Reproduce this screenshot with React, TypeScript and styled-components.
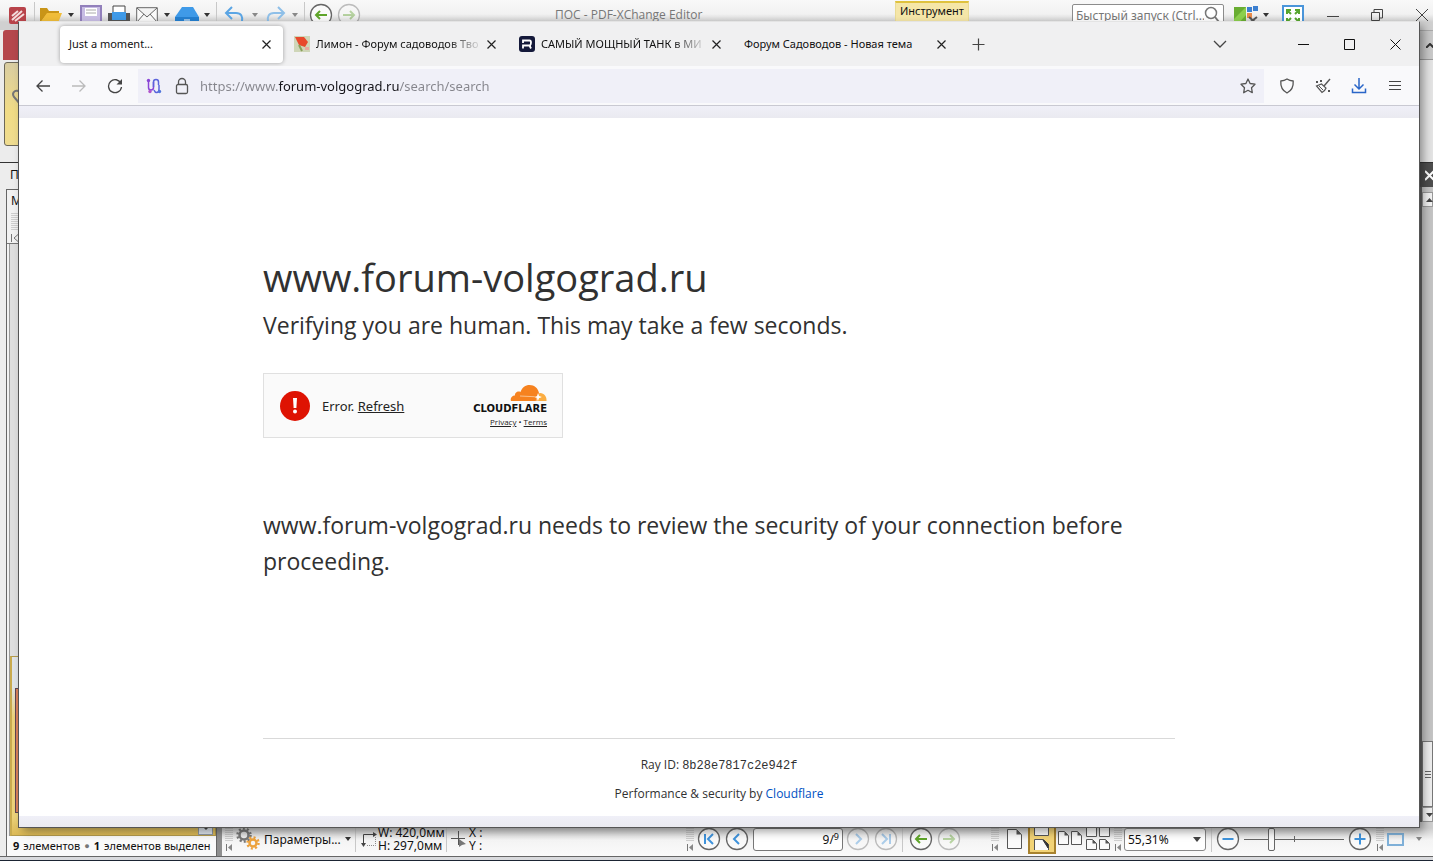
import React from "react";
import styled, { createGlobalStyle } from "styled-components";

const Global = createGlobalStyle`
  * { box-sizing: border-box; }
  body { margin: 0; font-family: "Noto Sans", "Open Sans", sans-serif; font-size: 12px; color: #111; }
  button, input, select { font: inherit; color: inherit; margin: 0; }
  h1, h2, p { margin: 0; font-weight: 400; }
`;

/* ---------- shared pieces ---------- */

const Svg = styled.svg<{ $w: number; $h: number }>`
  width: ${(p) => p.$w}px;
  height: ${(p) => p.$h}px;
  flex: none;
  display: block;
`;

type IconProps = { w?: number; h?: number; box?: string; children: React.ReactNode };
const Icon = ({ w = 16, h = 16, box, children }: IconProps) => (
  <Svg $w={w} $h={h} viewBox={box ?? `0 0 ${w} ${h}`} fill="none" aria-hidden="true">
    {children}
  </Svg>
);

const PlainButton = styled.button<{ $w?: number; $dim?: boolean }>`
  border: 0;
  padding: 0;
  background: none;
  flex: none;
  display: flex;
  align-items: center;
  justify-content: center;
  width: ${(p) => p.$w ?? 16}px;
  opacity: ${(p) => (p.$dim ? 0.4 : 1)};
`;

const Gap = styled.span<{ $w: number }>`
  flex: none;
  width: ${(p) => p.$w}px;
`;

const Spacer = styled.span`
  flex: 1;
`;

const Divider = styled.span`
  flex: none;
  width: 1px;
  height: 26px;
  background: #c8c8c8;
`;

const Caret = ({ dim }: { dim?: boolean }) => (
  <Icon w={6} h={4}>
    <path d="M0 0h6L3 4z" fill={dim ? "#888" : "#333"} />
  </Icon>
);

/* ---------- editor window ---------- */

const Desktop = styled.div`
  position: relative;
  min-height: 100vh;
  display: flex;
  flex-direction: column;
  overflow: hidden;
  background: #ececec;
`;

const TitleBar = styled.header`
  flex: none;
  display: flex;
  align-items: center;
  height: 30px;
  padding: 0 4px 0 9px;
  background: linear-gradient(#f9f9f9, #f2f2f2 14px, #d0d0d0 22px);
`;

const WindowTitle = styled.span`
  width: 146px;
  color: #777;
  font-family: "Open Sans", sans-serif;
  font-size: 12px;
  line-height: 16px;
  white-space: nowrap;
`;

const ContextTab = styled.button`
  align-self: flex-start;
  flex: none;
  width: 74px;
  margin-top: 1px;
  padding: 0;
  border: 1px solid #eadb94;
  border-top: 2px solid #dfc23e;
  background: #f5e6a8;
  font-size: 11px;
  line-height: 15px;
  text-align: center;
`;

const QuickLaunch = styled.label`
  display: flex;
  align-items: center;
  flex: none;
  width: 152px;
  height: 23px;
  padding: 0 3px;
  border: 1px solid #8c8c8c;
  border-radius: 2px;
  background: #fff;
`;

const QuickInput = styled.input`
  flex: 1;
  min-width: 0;
  border: 0;
  padding: 0;
  outline: 0;
  background: none;
  font-size: 12px;
  &::placeholder { color: #777; opacity: 1; }
`;

const Ribbon = styled.div`
  flex: none;
  display: flex;
  justify-content: space-between;
  height: 132px;
`;

const RibbonLeft = styled.div`
  width: 60px;
  padding-left: 3px;
`;

const FileTab = styled.button`
  display: block;
  width: 50px;
  height: 30px;
  border: 0;
  border-radius: 3px 3px 0 0;
  background: #b5474c;
`;

const HandTool = styled.button`
  display: flex;
  width: 50px;
  height: 84px;
  margin: 2px 0 0 1px;
  padding: 26px 0 0 7px;
  border: 1px solid #6d6858;
  border-radius: 3px;
  background: linear-gradient(#d9cda2, #f1dc85 60%, #efdc90);
`;

const RibbonRight = styled.div`
  width: 14px;
  border-top: 1px solid #aaa;
  background: #e4e4e4;
`;

const CollapseButton = styled.button`
  display: flex;
  align-items: center;
  width: 14px;
  height: 29px;
  padding: 0 0 0 7px;
  border: 0;
  border-bottom: 1px solid #999;
  background: #c9c9c9;
`;

const Work = styled.div`
  flex: 1;
  display: flex;
  border-top: 1px solid #333;
`;

const LeftDock = styled.aside`
  flex: none;
  display: flex;
  flex-direction: column;
  width: 217px;
  padding-left: 6px;
  background: #ededed;
`;

const DockTitle = styled.div`
  height: 26px;
  padding: 3px 0 0 4px;
`;

const Panel = styled.section`
  flex: 1;
  display: flex;
  flex-direction: column;
  border: 1px solid #666;
  border-bottom: 0;
  background: #f2f2f2;
`;

const PanelHead = styled.div`
  display: flex;
  flex-direction: column;
  gap: 4px;
  height: 54px;
  padding: 2px 0 0 4px;
  border-bottom: 1px solid #777;
  line-height: 17px;
`;

const PanelBody = styled.div`
  flex: 1;
  display: flex;
  flex-direction: column;
  margin-left: 2px;
  border-left: 1px solid #999;
  background: #dedede;
`;

const SelectedThumb = styled.div`
  display: flex;
  align-items: stretch;
  height: 180px;
  margin-top: auto;
  padding: 31px 2px 0 3px;
  border: 1px solid #b29a4d;
  border-left: 2px solid #c9ab4f;
  background: linear-gradient(#dfe3e6 30px, #ecd27a 60px, #ecd27a 160px, #dcb955);
`;

const ThumbPage = styled.div`
  width: 120px;
  margin-bottom: 22px;
  border: 1px solid #5b4654;
  background: #d9815a;
`;

const ThumbScroll = styled.div`
  flex: 1;
  display: flex;
  align-items: flex-end;
  justify-content: flex-end;
`;

const ThumbArrow = styled.button`
  display: flex;
  align-items: center;
  justify-content: center;
  width: 15px;
  height: 15px;
  padding: 0;
  border: 1px solid #8f98a3;
  background: #dfe6ee;
`;

const PanelStatus = styled.div`
  display: flex;
  gap: 4px;
  height: 20px;
  padding-left: 6px;
  background: #fafafa;
  font-size: 11px;
  line-height: 19px;
  white-space: nowrap;
  small { color: #777; }
`;

const Splitter = styled.div`
  flex: none;
  width: 5px;
  background: #8f8f8f;
`;

const MainArea = styled.div`
  flex: 1;
  min-width: 0;
  display: flex;
  flex-direction: column;
`;

const DocumentRow = styled.div`
  flex: 1;
  display: flex;
  justify-content: flex-end;
  background: #777;
`;

const ScrollColumn = styled.div`
  display: flex;
  flex-direction: column;
  width: 14px;
  border-left: 3px solid #666;
  background: #c4c4c4;
`;

const CloseDoc = styled.button`
  display: flex;
  align-items: center;
  height: 24px;
  margin: 0 0 5px -3px;
  padding: 0 0 0 6px;
  border: 0;
  background: #4d4d4d;
`;

const ScrollArrow = styled.button`
  display: flex;
  align-items: center;
  flex: none;
  height: 15px;
  padding: 0 0 0 3px;
  border: 1px solid #999;
  background: #f2f2f2;
`;

const ScrollThumb = styled.div`
  display: flex;
  align-items: center;
  height: 66px;
  margin-top: auto;
  padding-left: 2px;
  border: 1px solid #777;
  background: #eee;
`;

const StatusBar = styled.footer`
  flex: none;
  display: flex;
  align-items: center;
  height: 34px;
  padding: 0 11px 0 3px;
  background: linear-gradient(#cfcfcf 6px, #f4f4f4 18px, #fafafa);
`;

const BottomEdge = styled.div`
  flex: none;
  height: 5px;
  border-top: 1px solid #666;
  border-bottom: 1px solid #1b2433;
  background: #d9dadd;
`;

const MenuButton = styled.button`
  display: flex;
  align-items: center;
  gap: 4px;
  flex: none;
  width: 113px;
  padding: 0;
  border: 0;
  background: none;
  font-size: 12px;
  span { flex: 1; text-align: left; white-space: nowrap; }
`;

const Readout = styled.div<{ $w: number }>`
  flex: none;
  width: ${(p) => p.$w}px;
  font-size: 12px;
  line-height: 13px;
  white-space: nowrap;
`;

const PageBox = styled.label`
  display: flex;
  align-items: center;
  flex: none;
  width: 90px;
  height: 23px;
  padding-right: 3px;
  border: 1px solid #777;
  border-radius: 3px;
  background: #fff;
  sup { font-size: 9px; line-height: 9px; margin-bottom: 6px; }
`;

const PageInput = styled.input`
  flex: 1;
  min-width: 0;
  border: 0;
  padding: 0;
  outline: 0;
  background: none;
  text-align: right;
`;

const LayoutButton = styled.button`
  display: flex;
  align-items: center;
  justify-content: center;
  flex: none;
  width: 28px;
  height: 29px;
  padding: 0;
  border: 2px solid #a8822d;
  background: #f2d376;
`;

const ZoomBox = styled.div`
  position: relative;
  display: flex;
  align-items: center;
  flex: none;
  svg { position: absolute; right: 5px; pointer-events: none; }
`;

const ZoomSelect = styled.select`
  appearance: none;
  width: 82px;
  height: 23px;
  padding: 0 3px;
  border: 1px solid #888;
  border-radius: 3px;
  background: #fff;
  font-size: 12px;
`;

const ZoomSlider = styled.input`
  appearance: none;
  flex: none;
  width: 100px;
  height: 24px;
  background: linear-gradient(#666, #666) center / 100% 1px no-repeat,
    linear-gradient(#666, #666) center / 1px 6px no-repeat;
  &::-webkit-slider-thumb {
    appearance: none;
    width: 7px;
    height: 23px;
    border: 1px solid #666;
    border-radius: 2px;
    background: #fafafa;
  }
`;

const Grip = () => (
  <Icon w={8} h={26}>
    <path d="M1 0v16M3 0v16M5 0v16M7 0v16" stroke="#aaa" strokeDasharray="1 1" />
    <path d="M1.500 18v7" stroke="#777" />
    <path d="M7 18v7l-4-3.500z" fill="#888" />
  </Icon>
);

const roundPaths: Record<string, string> = {
  first: "M8 7v10M16 7l-5 5 5 5",
  prev: "M14 7l-5 5 5 5",
  next: "M10 7l5 5-5 5",
  last: "M16 7v10M8 7l5 5-5 5",
  back: "M18 12H7M11 8l-4 4 4 4",
  forward: "M6 12h11M13 8l4 4-4 4",
  minus: "M6.500 12h11",
  plus: "M6.500 12h11M12 6.500v11",
};

const Round = ({ kind, label, color = "#3f93dc", dim }: { kind: string; label: string; color?: string; dim?: boolean }) => (
  <PlainButton $w={24} $dim={dim} aria-label={label}>
    <Icon w={24} h={24}>
      <circle cx="12" cy="12" r="10.500" fill="#fafafa" stroke="#666" strokeWidth="1.300" />
      <path d={roundPaths[kind]} stroke={color} strokeWidth="2" />
    </Icon>
  </PlainButton>
);

const Page = ({ x, y, h = 20 }: { x: number; y: number; h?: number }) => (
  <g transform={`translate(${x} ${y})`}>
    <path d={`M.5.5h6l4 4v${h - 5}H.5z`} fill="#fafafa" stroke="#555" />
    <path d="M6.500.5v4h4z" fill="#555" />
  </g>
);

const EditorTitle = () => (
  <TitleBar>
    <Icon w={17} h={17}>
      <rect width="17" height="17" rx="2" fill="#b8434a" />
      <path d="M3 13 13 4M6 14l9-7M3 9l6-5" stroke="#f4dcdc" strokeWidth="2" />
    </Icon>
    <Gap $w={8} />
    <Divider />
    <Gap $w={4} />
    <PlainButton $w={24} aria-label="Открыть">
      <Icon w={24} h={18}>
        <path d="M1 17V2h7l2 3h10v3H8z" fill="#c99518" />
        <path d="M1 17 8 7h15l-4 10z" fill="#f0bd3a" />
      </Icon>
    </PlainButton>
    <Gap $w={5} />
    <Caret />
    <Gap $w={6} />
    <PlainButton $w={22} aria-label="Сохранить">
      <Icon w={22} h={20}>
        <path d="M1 1h20v18H1z" fill="#c8bde4" stroke="#9280bb" strokeWidth="2" />
        <path d="M5 3h12v8H5z" fill="#fff" />
        <path d="M6 5h10M6 8h10" stroke="#aaa" />
      </Icon>
    </PlainButton>
    <Gap $w={6} />
    <PlainButton $w={22} aria-label="Печать">
      <Icon w={22} h={20}>
        <path d="M5 1h12v9H5z" fill="#fff" stroke="#444" />
        <path d="M0 8h22v10H0z" fill="#555" />
        <path d="M4 7h14v8H4z" fill="#3f9ae8" />
      </Icon>
    </PlainButton>
    <Gap $w={6} />
    <PlainButton $w={22} aria-label="Отправить">
      <Icon w={22} h={16}>
        <path d="M.7.700h20.600v14.600H.7zM1 1l10 9L21 1M1 15l7-8M21 15l-7-8" fill="#fafafa" stroke="#666" />
      </Icon>
    </PlainButton>
    <Gap $w={6} />
    <Caret />
    <Gap $w={5} />
    <PlainButton $w={24} aria-label="Сканировать">
      <Icon w={24} h={18}>
        <path d="M0 11 7 1h11l6 10v6H0z" fill="#3f9ae8" />
        <path d="M0 11h24v5H0z" fill="#247fd0" />
        <path d="M9 14h6" stroke="#fff" />
      </Icon>
    </PlainButton>
    <Gap $w={5} />
    <Caret />
    <Gap $w={6} />
    <Divider />
    <Gap $w={7} />
    <PlainButton $w={22} aria-label="Отменить">
      <Icon w={22} h={18}>
        <path d="M8 1 2 7l6 6M2 7h10c5 0 7 3 6 9" stroke="#5ba5e4" strokeWidth="2" />
      </Icon>
    </PlainButton>
    <Gap $w={6} />
    <Caret dim />
    <Gap $w={6} />
    <PlainButton $w={22} aria-label="Повторить">
      <Icon w={22} h={18}>
        <path d="m14 1 6 6-6 6M20 7H10c-5 0-7 3-6 9" stroke="#8ebfe8" strokeWidth="2" />
      </Icon>
    </PlainButton>
    <Gap $w={6} />
    <Caret dim />
    <Gap $w={6} />
    <Divider />
    <Gap $w={4} />
    <Round kind="back" label="Предыдущий вид" color="#5fa52a" />
    <Gap $w={4} />
    <Round kind="forward" label="Следующий вид" color="#5fa52a" dim />
    <Spacer />
    <WindowTitle>ПОС - PDF-XChange Editor</WindowTitle>
    <Spacer />
    <ContextTab>Инструмент Рука</ContextTab>
    <Gap $w={103} />
    <QuickLaunch>
      <QuickInput placeholder="Быстрый запуск (Ctrl..." aria-label="Быстрый запуск" />
      <Icon w={16} h={18}>
        <circle cx="7" cy="7" r="5.500" stroke="#777" strokeWidth="1.500" />
        <path d="m11 11 4 5" stroke="#777" strokeWidth="2" />
      </Icon>
    </QuickLaunch>
    <Gap $w={10} />
    <PlainButton $w={24} aria-label="Интерфейс">
      <Icon w={24} h={20}>
        <path d="M0 2h12v18H0z" fill="#69ad32" />
        <path d="m0 14 12-12v8L3 20H0z" fill="#8ccf4d" />
        <path d="M13 2h5v5h-5zM19 1h5v5h-5z" fill="#3c7fd0" />
        <path d="M13 8h5v5h-5z" fill="#e88a49" />
        <path d="m14 19 9-7M15 12l8 7" stroke="#555" strokeWidth="2" />
      </Icon>
    </PlainButton>
    <Gap $w={5} />
    <Caret />
    <Gap $w={13} />
    <PlainButton $w={22} aria-label="Во весь экран">
      <Icon w={22} h={20}>
        <path d="M1 1h20v18H1z" fill="#fff" stroke="#4a95da" strokeWidth="2" />
        <path d="m5 5 4 4M17 5l-4 4M5 17l4-4M17 17l-4-4M5 9V5h4M13 5h4v4M5 13v4h4M13 17h4v-4" stroke="#57a52d" strokeWidth="2" />
      </Icon>
    </PlainButton>
    <Gap $w={22} />
    <PlainButton $w={14} aria-label="Свернуть редактор">
      <Icon w={12} h={4}><path d="M0 3.500h12" stroke="#444" /></Icon>
    </PlainButton>
    <Gap $w={30} />
    <PlainButton $w={14} aria-label="Восстановить редактор">
      <Icon w={12} h={12}><path d="M.5 3.500h8v8h-8zM3 3V.5h8.500V9H9" stroke="#444" /></Icon>
    </PlainButton>
    <Gap $w={31} />
    <PlainButton $w={14} aria-label="Закрыть редактор">
      <Icon w={14} h={14}><path d="m1 1 12 12M13 1 1 13" stroke="#444" /></Icon>
    </PlainButton>
  </TitleBar>
);

const EditorStatus = () => (
  <StatusBar>
    <Grip />
    <Gap $w={3} />
    <MenuButton>
      <Icon w={24} h={24}>
        <circle cx="8" cy="8" r="4.500" stroke="#777" strokeWidth="2.500" />
        <circle cx="8" cy="8" r="6.500" stroke="#777" strokeWidth="2.500" strokeDasharray="2 2.100" />
        <circle cx="17" cy="16" r="3.500" stroke="#eda23c" strokeWidth="2.500" />
        <circle cx="17" cy="16" r="5.500" stroke="#eda23c" strokeWidth="2.500" strokeDasharray="2 2.300" />
      </Icon>
      <span>Параметры...</span>
      <Caret />
    </MenuButton>
    <Gap $w={6} />
    <Divider />
    <Gap $w={5} />
    <Icon w={16} h={16}>
      <path d="M2.500 15V3.500H14" stroke="#444" />
      <path d="M0 12h5l-2.500 4zM12 1v5l4-2.500z" fill="#444" />
      <path d="M14.500 6v8.500H5" stroke="#888" strokeDasharray="1 1" />
    </Icon>
    <Gap $w={1} />
    <Readout $w={67}>W: 420,0мм<br />H: 297,0мм</Readout>
    <Gap $w={1} />
    <Divider />
    <Gap $w={4} />
    <Icon w={16} h={16}>
      <path d="M0 7.500h14M7.500 0v14" stroke="#555" />
      <path d="M8 8v8l3-2 4-1z" fill="#777" />
    </Icon>
    <Gap $w={2} />
    <Readout $w={16}>X :<br />Y :</Readout>
    <Spacer />
    <Grip />
    <Gap $w={3} />
    <Round kind="first" label="Первая страница" />
    <Gap $w={4} />
    <Round kind="prev" label="Предыдущая страница" />
    <Gap $w={4} />
    <PageBox>
      <PageInput defaultValue="9" aria-label="Страница" />/<sup>9</sup>
    </PageBox>
    <Gap $w={3} />
    <Round kind="next" label="Следующая страница" dim />
    <Gap $w={4} />
    <Round kind="last" label="Последняя страница" dim />
    <Gap $w={4} />
    <Divider />
    <Gap $w={6} />
    <Round kind="back" label="Назад" color="#5fa52a" />
    <Gap $w={4} />
    <Round kind="forward" label="Вперёд" color="#5fa52a" dim />
    <Gap $w={30} />
    <Grip />
    <Gap $w={7} />
    <PlainButton $w={17} aria-label="Одна страница">
      <Icon w={17} h={22}>
        <path d="M1.500 1.500h9l5 5v14h-14z" fill="#fafafa" stroke="#555" />
        <path d="M10.500 1.500v5h5z" fill="#555" />
      </Icon>
    </PlainButton>
    <Gap $w={5} />
    <LayoutButton aria-label="Непрерывно">
      <Icon w={18} h={24}>
        <path d="M1.500 0v8.500h14V0M1.500 23V12.500h9l5 5V23" fill="#fafafa" stroke="#555" />
        <path d="m10 13 5 8v-4z" fill="#333" stroke="#333" />
      </Icon>
    </LayoutButton>
    <Gap $w={2} />
    <PlainButton $w={25} aria-label="Две страницы">
      <Icon w={25} h={18}><Page x={0} y={1} h={14} /><Page x={13} y={1} h={14} /></Icon>
    </PlainButton>
    <Gap $w={3} />
    <PlainButton $w={25} aria-label="Две страницы непрерывно">
      <Icon w={25} h={24}>
        <path d="M.5 0v9.500h10V0M13.500 0v9.500h10V0" fill="#fafafa" stroke="#555" />
        <Page x={0} y={12} h={11} /><Page x={13} y={12} h={11} />
      </Icon>
    </PlainButton>
    <Gap $w={3} />
    <Grip />
    <Gap $w={2} />
    <ZoomBox>
      <ZoomSelect aria-label="Масштаб" defaultValue="a"><option value="a">55,31%</option></ZoomSelect>
      <Icon w={8} h={5}><path d="M0 0h8L4 5z" fill="#444" /></Icon>
    </ZoomBox>
    <Gap $w={5} />
    <Divider />
    <Gap $w={4} />
    <Round kind="minus" label="Уменьшить" />
    <Gap $w={4} />
    <ZoomSlider type="range" min="0" max="100" defaultValue="26" aria-label="Ползунок масштаба" />
    <Gap $w={4} />
    <Round kind="plus" label="Увеличить" />
    <Gap $w={4} />
    <Grip />
    <Gap $w={3} />
    <Icon w={17} h={13}><path d="M1 1h15v11H1z" stroke="#7fb0d8" strokeWidth="2" /></Icon>
    <Gap $w={12} />
    <Caret dim />
  </StatusBar>
);

/* ---------- browser window ---------- */

const Browser = styled.div`
  position: absolute;
  inset: 21px 13px 33px 18px;
  display: flex;
  flex-direction: column;
  border: 1px solid #555;
  border-top-color: #e4e4e4;
  background: #fff;
  box-shadow: 4px 4px 9px -1px rgba(0, 0, 0, 0.4);
`;

const TabStrip = styled.div`
  flex: none;
  display: flex;
  align-items: center;
  height: 44px;
  padding: 0 16px 0 41px;
  background: #f0f0f1;
`;

const Tab = styled.div<{ $active?: boolean; $w: number }>`
  flex: none;
  display: flex;
  align-items: center;
  width: ${(p) => p.$w}px;
  height: 37px;
  padding: 0 9px;
  border-radius: 4px;
  background: ${(p) => (p.$active ? "#fff" : "transparent")};
  box-shadow: ${(p) => (p.$active ? "0 0 4px rgba(0, 0, 0, 0.35)" : "none")};
`;

const TabLabel = styled.button<{ $fade?: boolean }>`
  flex: 1;
  min-width: 0;
  display: flex;
  align-items: center;
  gap: 6px;
  padding: 0;
  border: 0;
  background: none;
  font-size: 11px;
  line-height: 20px;
  white-space: nowrap;
  mask-image: ${(p) => (p.$fade ? "linear-gradient(to left, transparent, #000 36px)" : "none")};
`;

const NavBar = styled.div`
  flex: none;
  display: flex;
  align-items: center;
  height: 40px;
  padding: 0 16px;
  border-bottom: 1px solid #c9c9d2;
  background: #f9f9fb;
`;

const UrlBox = styled.label`
  flex: 1;
  display: flex;
  align-items: center;
  height: 34px;
  padding: 0 8px;
  background: #f0f0f8;
`;

const UrlInput = styled.input`
  flex: 1;
  min-width: 0;
  padding: 0;
  border: 0;
  outline: 0;
  font-size: 13px;
  color: transparent;
  background: linear-gradient(to right, #85858c 78px, #15141a 78px 199px, #85858c 199px);
  background-clip: text;
  -webkit-background-clip: text;
`;

const Strip = styled.div<{ $h: number }>`
  flex: none;
  height: ${(p) => p.$h}px;
  background: linear-gradient(#f0f0f8, #eaeaf0);
`;

const PageView = styled.main`
  flex: 1;
  display: flex;
  flex-direction: column;
  width: 100%;
  max-width: 960px;
  margin: 0 auto;
  padding: 129px 24px 0;
  color: #313131;
  font-family: "Open Sans", "Noto Sans", sans-serif;
`;

const Host = styled.h1`
  font-size: 38px;
  line-height: 60px;
`;

const Lead = styled.h2`
  font-size: 23px;
  line-height: 36px;
`;

const Widget = styled.div`
  display: flex;
  align-items: center;
  width: 300px;
  height: 65px;
  margin: 30px 0 69px;
  padding: 0 15px 0 16px;
  border: 1px solid #e0e0e0;
  background: #fafafa;
`;

const WidgetText = styled.span`
  flex: 1;
  padding-left: 12px;
  font-family: "Noto Sans", sans-serif;
  font-size: 13px;
  color: #232323;
`;

const Link = styled.a<{ $blue?: boolean }>`
  color: ${(p) => (p.$blue ? "#0051c3" : "inherit")};
  text-decoration: ${(p) => (p.$blue ? "none" : "underline")};
`;

const Brand = styled.div`
  display: flex;
  flex-direction: column;
  align-items: flex-end;
  padding-top: 2px;
`;

const Wordmark = styled.strong`
  font: 700 10px/14px "DejaVu Sans", sans-serif;
  color: #111;
`;

const Legal = styled.span`
  font-size: 8px;
  line-height: 12px;
  color: #232323;
`;

const Footer = styled.footer`
  margin-top: auto;
  height: 78px;
  padding-top: 16px;
  border-top: 1px solid #d9d9d9;
  text-align: center;
  font-size: 12px;
  line-height: 20px;
  p + p { margin-top: 8px; }
  code { font: 12px/20px "Liberation Mono", monospace; }
`;

const CloseX = ({ label }: { label: string }) => (
  <PlainButton aria-label={label}>
    <Icon w={9} h={9}><path d="m.5.5 8 8M8.500.5l-8 8" stroke="#222" strokeWidth="1.200" /></Icon>
  </PlainButton>
);

const BrowserWindow = () => (
  <Browser>
    <TabStrip>
      <Tab $active $w={223}>
        <TabLabel>Just a moment...</TabLabel>
        <CloseX label="Закрыть вкладку Just a moment" />
      </Tab>
      <Gap $w={2} />
      <Tab $w={223}>
        <TabLabel $fade>
          <Icon w={16} h={16}>
            <rect width="16" height="16" fill="#cfd6b8" />
            <path d="M1 1h9l4 5-3 5-6-2z" fill="#e8492c" />
            <path d="M11 11h4v3h-4z" fill="#e9a9a0" />
            <path d="m5 9 3 6" stroke="#88a05b" strokeWidth="2" />
          </Icon>
          Лимон - Форум садоводов Тво
        </TabLabel>
        <CloseX label="Закрыть вкладку Лимон" />
      </Tab>
      <Gap $w={2} />
      <Tab $w={223}>
        <TabLabel $fade>
          <Icon w={16} h={16}>
            <rect width="16" height="16" rx="3" fill="#14193a" />
            <path d="M4 12.500V9.500h8M4 7V4.500h6.500c2 0 2 4.500 0 5L12 12.500" stroke="#fff" strokeWidth="1.800" />
          </Icon>
          САМЫЙ МОЩНЫЙ ТАНК в МИ
        </TabLabel>
        <CloseX label="Закрыть вкладку САМЫЙ МОЩНЫЙ ТАНК" />
      </Tab>
      <Gap $w={2} />
      <Tab $w={223}>
        <TabLabel>Форум Садоводов - Новая тема</TabLabel>
        <CloseX label="Закрыть вкладку Форум Садоводов" />
      </Tab>
      <Gap $w={3} />
      <PlainButton aria-label="Новая вкладка" $w={34}>
        <Icon w={13} h={13}><path d="M6.500.5v12M.5 6.500h12" stroke="#444" strokeWidth="1.200" /></Icon>
      </PlainButton>
      <Spacer />
      <PlainButton aria-label="Список вкладок">
        <Icon w={14} h={8}><path d="m1 1 6 6 6-6" stroke="#444" strokeWidth="1.300" /></Icon>
      </PlainButton>
      <Gap $w={67} />
      <PlainButton aria-label="Свернуть">
        <Icon w={11} h={3}><path d="M0 1.500h11" stroke="#111" /></Icon>
      </PlainButton>
      <Gap $w={30} />
      <PlainButton aria-label="Развернуть">
        <Icon w={11} h={11}><path d="M.5.5h10v10H.5z" stroke="#111" /></Icon>
      </PlainButton>
      <Gap $w={30} />
      <PlainButton aria-label="Закрыть">
        <Icon w={11} h={11}><path d="m.5.5 10 10M10.500.5l-10 10" stroke="#111" /></Icon>
      </PlainButton>
    </TabStrip>
    <NavBar>
      <PlainButton aria-label="Назад">
        <Icon w={16} h={14}><path d="M15 7H2M7.500 1.500 2 7l5.500 5.500" stroke="#444" strokeWidth="1.300" /></Icon>
      </PlainButton>
      <Gap $w={20} />
      <PlainButton aria-label="Вперёд">
        <Icon w={16} h={14}><path d="M1 7h13M8.500 1.500 14 7l-5.500 5.500" stroke="#bbb" strokeWidth="1.300" /></Icon>
      </PlainButton>
      <Gap $w={20} />
      <PlainButton aria-label="Обновить">
        <Icon w={16} h={16}>
          <path d="M14 5.500A6.500 6.500 0 1 0 14.500 9" stroke="#444" strokeWidth="1.300" />
          <path d="M15 1v5.500H9.500z" fill="#444" />
        </Icon>
      </PlainButton>
      <Gap $w={15} />
      <UrlBox>
        <Icon w={16} h={16}>
          <path d="M2.500 2v7.500a2.300 2.300 0 0 0 5 0V4" stroke="#8a45d6" strokeWidth="1.500" />
          <path d="M7.500 9V4a2.500 2.500 0 0 1 5 0v3M8 12c1.500 4 5 3 5-1V7" stroke="#5c64dc" strokeWidth="1.500" />
          <circle cx="2.500" cy="2.500" r="1.700" fill="#8a45d6" />
          <circle cx="4" cy="13.500" r="1.700" fill="#b054cc" />
          <circle cx="13.500" cy="13.500" r="1.700" fill="#5276dc" />
        </Icon>
        <Gap $w={12} />
        <Icon w={16} h={18}>
          <rect x="2.500" y="7.500" width="11" height="9" rx="1.500" stroke="#555" strokeWidth="1.300" />
          <path d="M4.500 7.500V5a3.500 3.500 0 0 1 7 0v2.500" stroke="#555" strokeWidth="1.300" />
        </Icon>
        <Gap $w={10} />
        <UrlInput defaultValue="https://www.forum-volgograd.ru/search/search" aria-label="Адрес" />
        <PlainButton aria-label="Добавить закладку">
          <Icon w={16} h={16}>
            <path d="m8 1 2.100 4.500 4.900.7-3.500 3.500.8 5L8 12.300l-4.300 2.400.8-5L1 6.200l4.900-.7z" stroke="#555" strokeWidth="1.300" strokeLinejoin="round" />
          </Icon>
        </PlainButton>
      </UrlBox>
      <Gap $w={15} />
      <PlainButton aria-label="Защита">
        <Icon w={16} h={16}>
          <path d="M8 1c2 1.300 4 1.800 6.200 2 .4 5.600-1.500 9.600-6.200 12C3.300 12.600 1.400 8.600 1.800 3 4 2.800 6 2.300 8 1z" stroke="#555" strokeWidth="1.300" strokeLinejoin="round" />
        </Icon>
      </PlainButton>
      <Gap $w={20} />
      <PlainButton aria-label="Очистить">
        <Icon w={16} h={16}>
          <path d="m15 1-6 7" stroke="#555" strokeWidth="1.400" />
          <path d="M6.500 6 11 10l-1.500 2.500L7 14.500 1.500 8z" stroke="#555" strokeWidth="1.200" />
          <path d="m4 8 4 4" stroke="#555" />
          <path d="M1 3h2v2H1zM5 2h2v2H5zM13 12h2v2h-2z" fill="#555" />
        </Icon>
      </PlainButton>
      <Gap $w={20} />
      <PlainButton aria-label="Загрузки">
        <Icon w={16} h={16}>
          <path d="M8 0v11M3.500 6.500 8 11l4.500-4.500M1.500 10.500v4h13v-4" stroke="#2a66c8" strokeWidth="1.500" />
        </Icon>
      </PlainButton>
      <Gap $w={20} />
      <PlainButton aria-label="Меню">
        <Icon w={12} h={11}><path d="M0 1.500h12M0 5.500h12M0 9.500h12" stroke="#444" /></Icon>
      </PlainButton>
    </NavBar>
    <Strip $h={12} />
    <PageView>
      <Host>www.forum-volgograd.ru</Host>
      <Lead>Verifying you are human. This may take a few seconds.</Lead>
      <Widget>
        <Icon w={30} h={30}>
          <circle cx="15" cy="15" r="15" fill="#de1303" />
          <path d="M13 7h4l-.6 10h-2.800z" fill="#fff" />
          <circle cx="15" cy="20.500" r="2" fill="#fff" />
        </Icon>
        <WidgetText>Error. <Link href="#refresh">Refresh</Link></WidgetText>
        <Brand>
          <Icon w={37} h={17}>
            <path d="M1 16c-1-3 1-5.500 4-5.500-.5-3 3-5 5.500-3.500C12 2.500 15.500 0 19.500 0 24.500 0 28 3 29 8l-2 8z" fill="#f6821f" />
            <path d="M26 16c1.500-2 .5-4-2-4.300l-14-.7" stroke="#fbd0a6" strokeWidth=".8" />
            <path d="M27 16l1.500-3 2.500-.8-2.500-1 .8-3.200c4.700-.5 7.700 3.500 7.200 8z" fill="#fbad41" />
            <path d="m28 8 1 3 3 1-3 1-1 3-1-3-2-1 2-1z" fill="#fff" />
          </Icon>
          <Wordmark>CLOUDFLARE</Wordmark>
          <Legal><Link href="#privacy">Privacy</Link> • <Link href="#terms">Terms</Link></Legal>
        </Brand>
      </Widget>
      <Lead>www.forum-volgograd.ru needs to review the security of your connection before proceeding.</Lead>
      <Footer>
        <p>Ray ID: <code>8b28e7817c2e942f</code></p>
        <p>Performance &amp; security by <Link $blue href="#cloudflare">Cloudflare</Link></p>
      </Footer>
    </PageView>
    <Strip $h={11} />
  </Browser>
);

export default function App() {
  return (
    <Desktop>
      <Global />
      <EditorTitle />
      <Ribbon>
        <RibbonLeft>
          <FileTab aria-label="Файл" />
          <HandTool aria-label="Рука">
            <Icon w={14} h={16}><path d="M8 15 2 8c-3-5 3-9 6-4" stroke="#777" strokeWidth="2" /></Icon>
          </HandTool>
        </RibbonLeft>
        <RibbonRight>
          <CollapseButton aria-label="Свернуть ленту">
            <Icon w={7} h={5}><path d="m0 5 4-4 4 4" stroke="#333" strokeWidth="2" /></Icon>
          </CollapseButton>
        </RibbonRight>
      </Ribbon>
      <Work>
        <LeftDock>
          <DockTitle>П</DockTitle>
          <Panel>
            <PanelHead>
              М
              <Icon w={8} h={30}>
                <path d="M1 0v18M3 0v18M5 0v18M7 0v18" stroke="#aaa" strokeDasharray="1 1" />
                <path d="M.5 21v8M7 21.500 3 25l4 3.500" stroke="#777" />
              </Icon>
            </PanelHead>
            <PanelBody>
              <SelectedThumb>
                <ThumbPage />
                <ThumbScroll>
                  <ThumbArrow aria-label="Прокрутить вниз">
                    <Icon w={8} h={4}><path d="M0 0h8L4 4z" fill="#444" /></Icon>
                  </ThumbArrow>
                </ThumbScroll>
              </SelectedThumb>
            </PanelBody>
            <PanelStatus><b>9</b><span>элементов</span><small>●</small><b>1</b><span>элементов выделен</span></PanelStatus>
          </Panel>
        </LeftDock>
        <Splitter />
        <MainArea>
          <DocumentRow>
            <ScrollColumn>
              <CloseDoc aria-label="Закрыть документ">
                <Icon w={8} h={11}><path d="m0 1 9 9M9 1 0 10" stroke="#fff" strokeWidth="2" /></Icon>
              </CloseDoc>
              <ScrollArrow aria-label="Вверх"><Icon w={7} h={4}><path d="M0 4h7L3.500 0z" fill="#444" /></Icon></ScrollArrow>
              <ScrollThumb><Icon w={6} h={7}><path d="M0 .5h6M0 3.500h6M0 6.500h6" stroke="#666" /></Icon></ScrollThumb>
              <ScrollArrow aria-label="Вниз"><Icon w={7} h={4}><path d="M0 0h7L3.500 4z" fill="#444" /></Icon></ScrollArrow>
            </ScrollColumn>
          </DocumentRow>
          <EditorStatus />
        </MainArea>
      </Work>
      <BottomEdge />
      <BrowserWindow />
    </Desktop>
  );
}
